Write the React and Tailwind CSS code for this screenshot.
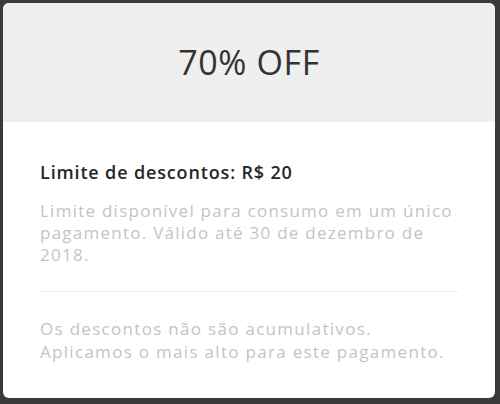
export default function App() {
    return (
        <div className="w-[500px] h-[404px] bg-[#3a3a3a] p-[3px] pr-[5px] pb-[6px]" style={{ fontFamily: "'Open Sans', Lato, sans-serif" }}>
            <div className="h-full bg-white rounded-[6px] overflow-hidden flex flex-col">
                <div className="h-[119px] bg-[#efefef] flex items-center justify-center">
                    <h1 className="text-[34px] text-[#333] tracking-[0.6px] font-normal">70% OFF</h1>
                </div>
                <div className="px-[37px] pt-[38px]">
                    <p className="text-[18px] font-semibold text-[#262626] leading-[24px] tracking-[0.85px]">Limite de descontos: R$ 20</p>
                    <p className="mt-[16px] text-[17px] text-[#c4c4c4] leading-[22px] tracking-[1.25px] whitespace-nowrap">
                        Limite disponível para consumo em um único
                        <br />
                        pagamento. Válido até 30 de dezembro de
                        <br />
                        2018.
                    </p>
                    <div className="mt-[25px] border-t border-[#ececec]" />
                    <p className="mt-[25px] text-[17px] text-[#c4c4c4] leading-[23px] tracking-[1.3px] whitespace-nowrap">
                        Os descontos não são acumulativos.
                        <br />
                        Aplicamos o mais alto para este pagamento.
                    </p>
                </div>
            </div>
        </div>
    );
}
